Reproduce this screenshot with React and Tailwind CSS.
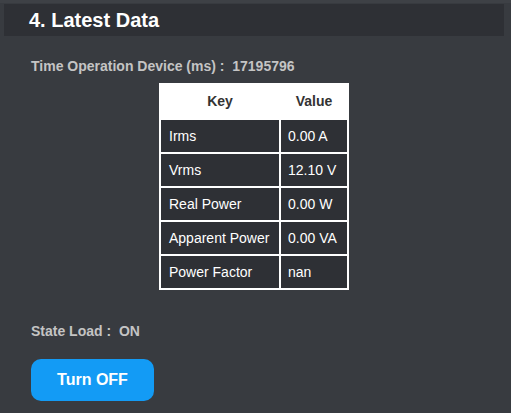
export default function App() {
  const rows = [
    ["Irms", "0.00 A"],
    ["Vrms", "12.10 V"],
    ["Real Power", "0.00 W"],
    ["Apparent Power", "0.00 VA"],
    ["Power Factor", "nan"],
  ];

  return (
    <div className="min-h-[413px] w-[511px] bg-[#383b40] border-t-[3px] border-[#3e4146] pt-px font-['Liberation_Sans',Arial,sans-serif]">
      <div className="ml-1 mr-[7px] h-8 bg-[#2e3035] flex items-center pl-[25px]">
        <h2 className="text-[20px] font-bold text-white leading-none">4. Latest Data</h2>
      </div>

      <div className="px-[31px]">
        <p className="mt-[21px] text-[14px] font-bold text-[#c4c4c4] leading-[18px]">
          Time Operation Device (ms) :&nbsp; 17195796
        </p>

        <table className="mt-[8px] ml-[128px] border-collapse border-2 border-white text-[14px]">
          <thead>
            <tr className="bg-white h-[35px]">
              <th className="w-[120px] border-2 border-white font-bold text-[#333] text-center">Key</th>
              <th className="w-[68px] border-2 border-white font-bold text-[#333] text-center">Value</th>
            </tr>
          </thead>
          <tbody>
            {rows.map(([k, v]) => (
              <tr key={k} className="h-[34px] bg-[#2e3035]">
                <td className="border-2 border-white pl-[8px] text-white">{k}</td>
                <td className="border-2 border-white pl-[7px] text-white">{v}</td>
              </tr>
            ))}
          </tbody>
        </table>

        <p className="mt-[32px] text-[14px] font-bold text-[#c4c4c4] leading-[18px]">State Load :&nbsp; ON</p>

        <button className="mt-[19px] w-[123px] h-[42px] rounded-[10px] bg-[#139bf5] text-white text-[16px] font-bold">
          Turn OFF
        </button>
      </div>
    </div>
  );
}
